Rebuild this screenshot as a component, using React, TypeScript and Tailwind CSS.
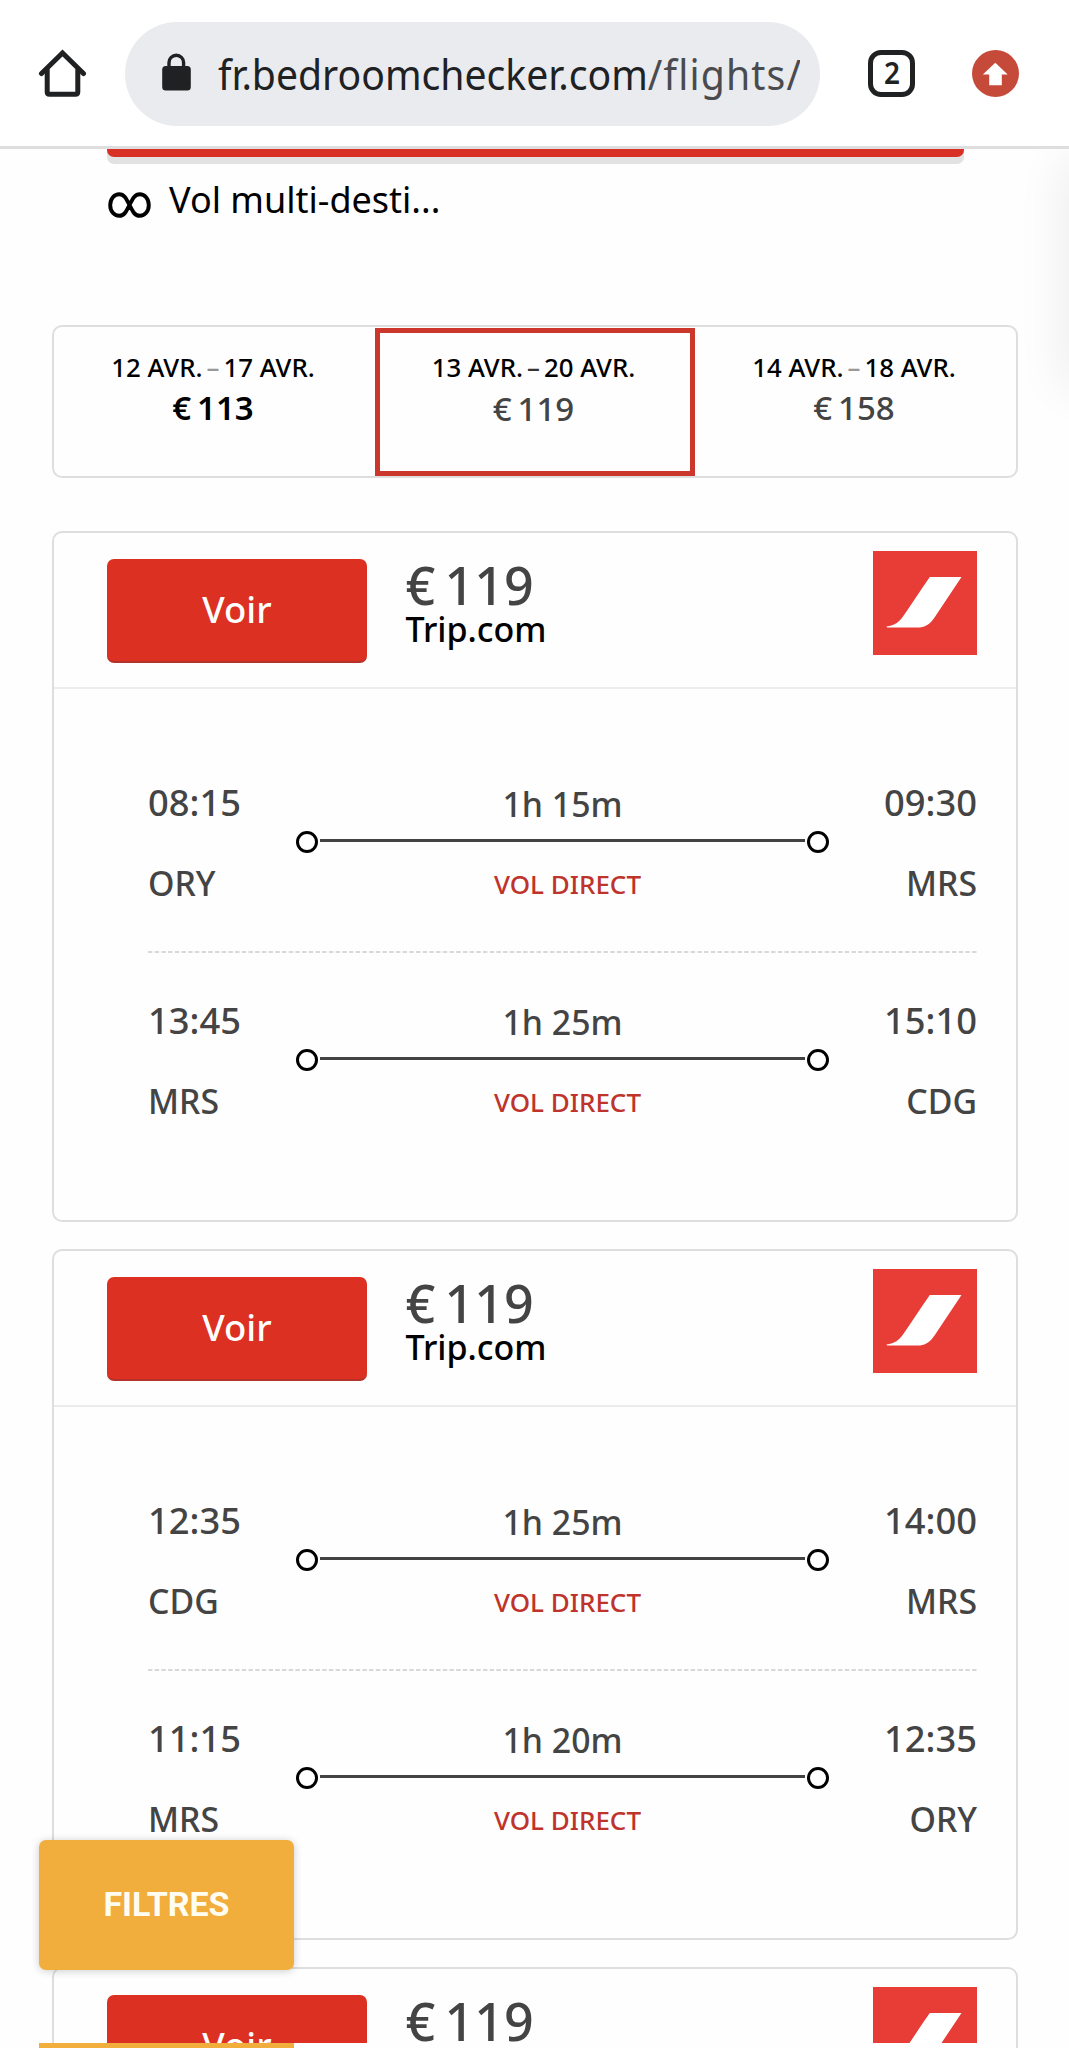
import React from "react";

type LegData = { dep: string; arr: string; from: string; to: string; dur: string };

const cards: LegData[][] = [
  [
    { dep: "08:15", arr: "09:30", from: "ORY", to: "MRS", dur: "1h 15m" },
    { dep: "13:45", arr: "15:10", from: "MRS", to: "CDG", dur: "1h 25m" },
  ],
  [
    { dep: "12:35", arr: "14:00", from: "CDG", to: "MRS", dur: "1h 25m" },
    { dep: "11:15", arr: "12:35", from: "MRS", to: "ORY", dur: "1h 20m" },
  ],
  [],
];

function BrowserBar() {
  return (
    <header className="flex h-[149px] shrink-0 items-start border-b-[3px] border-[#dedede] bg-white">
      <svg className="ml-[38px] mt-[49px] h-[49px] w-[49px] shrink-0" viewBox="0 0 49 49" fill="none" stroke="#202122" strokeWidth="5" strokeLinecap="round" strokeLinejoin="round">
        <path d="M3.5 24.5 24.5 4 45.5 24.5" strokeLinejoin="miter" />
        <path d="M9.2 21V43Q9.2 45.3 11.5 45.3H37.5Q39.8 45.3 39.8 43V21" />
      </svg>
      <div className="ml-[38px] mt-[21.5px] flex h-[104px] w-[695px] shrink-0 items-center overflow-hidden rounded-full bg-[#eaebef]">
        <svg className="mb-[3px] ml-[37px] h-[38px] w-[29px] shrink-0" viewBox="0 0 29 38">
          <path d="M7 16V9.5a7.3 7.3 0 0 1 14.6 0V16" fill="none" stroke="#202122" strokeWidth="3.4" />
          <rect x="0.2" y="13" width="28.6" height="24.5" rx="3.5" fill="#202122" />
        </svg>
        <div className="ml-[27px] w-[582px] overflow-hidden whitespace-nowrap">
          <div className="w-max origin-left scale-x-[0.955] text-[41px] leading-[56px] text-[#202122]">
            fr.bedroomchecker.com<span className="tracking-[1.2px] text-[#4a4b4e]">/flights/</span>
          </div>
        </div>
      </div>
      <div className="ml-[48px] mt-[50px] flex h-[47px] w-[47px] shrink-0 items-center justify-center rounded-[13px] border-[5px] border-[#202122] text-[31px] font-semibold leading-none text-[#202122]">
        <span className="-mt-[2px] scale-x-[0.9]">2</span>
      </div>
      <svg className="ml-[57px] mt-[50px] h-[47px] w-[47px] shrink-0" viewBox="0 0 47 47">
        <circle cx="23.5" cy="23.5" r="23.5" fill="#c54a39" />
        <path d="M23.3 12.7 35.7 24.4H29.8V35.3H17.2V24.4H10.8Z" fill="#fff" />
      </svg>
    </header>
  );
}

function DateTab({ a, b, price, active, first }: { a: string; b: string; price: string; active?: boolean; first?: boolean }) {
  return (
    <div className={"flex shrink-0 flex-col items-center pr-[3px] " + (active ? "mt-[1px] h-[148px] w-[320px] border-[5px] border-[#cb372b] pt-[17px]" : "h-[149px] w-[321px] pt-[22.5px]")}>
      <div className="flex whitespace-nowrap text-[25.8px] font-medium leading-[34px] text-black">
        {a}
        <span className={"mx-[4px] " + (active ? "text-[#333]" : "text-[#999]")}>–</span>
        {b}
      </div>
      <Price value={price} className={"mt-[6.5px] text-[33px] leading-[36px] " + (first ? "font-semibold text-black" : "font-medium text-[#444]")} />
    </div>
  );
}

function Price({ value, className }: { value: string; className: string }) {
  return (
    <div className={"flex gap-[0.18em] whitespace-nowrap " + className}>
      <span>€</span>
      <span>{value}</span>
    </div>
  );
}

function AirlineLogo() {
  return (
    <svg className="h-[104px] w-[104px] shrink-0" viewBox="0 0 104 104">
      <rect width="104" height="104" fill="#e83c37" />
      <path d="M13.5 75.5C22 74.5 26 71 30 65.5C38 54 47 40 56.8 26H88.5L61.5 66.5C57 73 53.5 75.5 47 76.5H14Z" fill="#fff" />
    </svg>
  );
}

function Dot() {
  return <span className="h-[22px] w-[22px] shrink-0 rounded-full border-[3px] border-black bg-white" />;
}

function Leg({ leg }: { leg: LegData }) {
  return (
    <div className="flex h-[127px] justify-between font-medium text-[#444]">
      <div className="flex w-[147px] shrink-0 flex-col">
        <span className="-mt-[1px] text-[36.3px] leading-[48px]">{leg.dep}</span>
        <span className="mt-[34px] text-[33.8px] leading-[46px]">{leg.from}</span>
      </div>
      <div className="flex w-[533px] shrink-0 flex-col items-center">
        <span className="mt-[1px] text-[33.8px] leading-[48px]">{leg.dur}</span>
        <div className="mt-[3px] flex h-[22px] w-full items-center gap-[2px]">
          <Dot />
          <span className="mb-[3px] h-[3px] flex-1 bg-[#424242]" />
          <Dot />
        </div>
        <span className="ml-[10px] mt-[13px] text-[26px] leading-[36px] text-[#be342c]">VOL DIRECT</span>
      </div>
      <div className="flex w-[147px] shrink-0 flex-col items-end">
        <span className="-mt-[1px] text-[36.3px] leading-[48px]">{leg.arr}</span>
        <span className="mt-[34px] text-[33.8px] leading-[46px]">{leg.to}</span>
      </div>
    </div>
  );
}

function FlightCard({ legs }: { legs: LegData[] }) {
  return (
    <section className="h-[691px] shrink-0 rounded-[10px] border-2 border-[#dedede] bg-[#fefefe]">
      <div className="flex h-[156px] items-start border-b-2 border-[#ececec] pl-[53px] pr-[39px]">
        <button className="mt-[26px] flex h-[104px] w-[260px] shrink-0 items-center justify-center rounded-[7px] border-b-2 border-[#b3332a] bg-[#dc3022] pb-[2px] text-[36.5px] font-medium text-white">
          Voir
        </button>
        <div className="ml-[38.5px] mt-[28px] flex-1">
          <Price value="119" className="text-[52px] font-medium leading-[47px] text-[#444]" />
          <div className="text-[34px] font-medium leading-[43px] text-black">Trip.com</div>
        </div>
        <div className="mt-[18px]">
          <AirlineLogo />
        </div>
      </div>
      {legs.length > 0 && (
        <div className="pl-[94px] pr-[39px] pt-[90px]">
          <Leg leg={legs[0]} />
          <svg className="mb-[44px] mt-[45px] block h-[2px] w-full">
            <line x1="0" y1="1" x2="100%" y2="1" stroke="#d8d8d8" strokeWidth="2" strokeDasharray="4.4 2.3" />
          </svg>
          <Leg leg={legs[1]} />
        </div>
      )}
    </section>
  );
}

export default function App() {
  return (
    <div className="relative flex h-[2048px] w-[1069px] flex-col overflow-hidden bg-[#fefefe] font-['Noto_Sans','Open_Sans',sans-serif]">
      <BrowserBar />
      <div className="mx-[107px] h-[15px] w-[857px] shrink-0 rounded-b-[7px] bg-[#e2e2e2]">
        <div className="h-[7.5px] rounded-b-[7px] bg-[#d83024]" />
      </div>
      <div className="ml-[108px] mt-[9px] flex h-[54px] shrink-0 items-center">
        <svg className="mt-[9px] h-[26px] w-[43px]" viewBox="0 0 43 26" fill="none" stroke="#000" strokeWidth="3.9">
          <path d="M21.5 13C18 6 16 2.2 11.2 2.2S2.2 6.5 2.2 13s4 10.8 9 10.8S18 20 21.5 13S27 2.2 31.8 2.2S40.8 6.5 40.8 13s-4 10.8-9 10.8S25 20 21.5 13Z" />
        </svg>
        <span className="ml-[18px] whitespace-nowrap text-[36px] leading-[50px] text-black">Vol multi-desti...</span>
      </div>
      <main className="ml-[52px] mt-[98px] flex w-[966px] shrink-0 flex-col">
        <div className="flex h-[153px] items-start rounded-[10px] border-2 border-[#dedede] bg-[#fefefe]">
          <DateTab a="12 AVR." b="17 AVR." price="113" first />
          <DateTab a="13 AVR." b="20 AVR." price="119" active />
          <DateTab a="14 AVR." b="18 AVR." price="158" />
        </div>
        <div className="mt-[53px] flex flex-col gap-[27px]">
          {cards.map((legs, i) => (
            <FlightCard key={i} legs={legs} />
          ))}
        </div>
      </main>
      <div className="absolute right-0 top-[149px] h-[290px] w-[70px] overflow-hidden">
        <div className="absolute -right-[40px] top-[15px] h-[220px] w-[40px] shadow-[0_0_50px_4px_rgba(0,0,0,0.08)]" />
      </div>
      <button className="absolute left-[39px] top-[1840px] flex h-[130px] w-[255px] items-center justify-center rounded-[7px] bg-[#f2ae3d] pb-[2px] font-['Roboto',sans-serif] text-[34px] font-bold text-[#fffdf2] shadow-[0_1px_8px_rgba(0,0,0,0.2)]">
        FILTRES
      </button>
      <div className="absolute bottom-0 left-0 h-[5px] w-[1000px] bg-[#fefefe]">
        <div className="ml-[39px] h-full w-[255px] bg-[#f2ae3d]" />
      </div>
    </div>
  );
}
